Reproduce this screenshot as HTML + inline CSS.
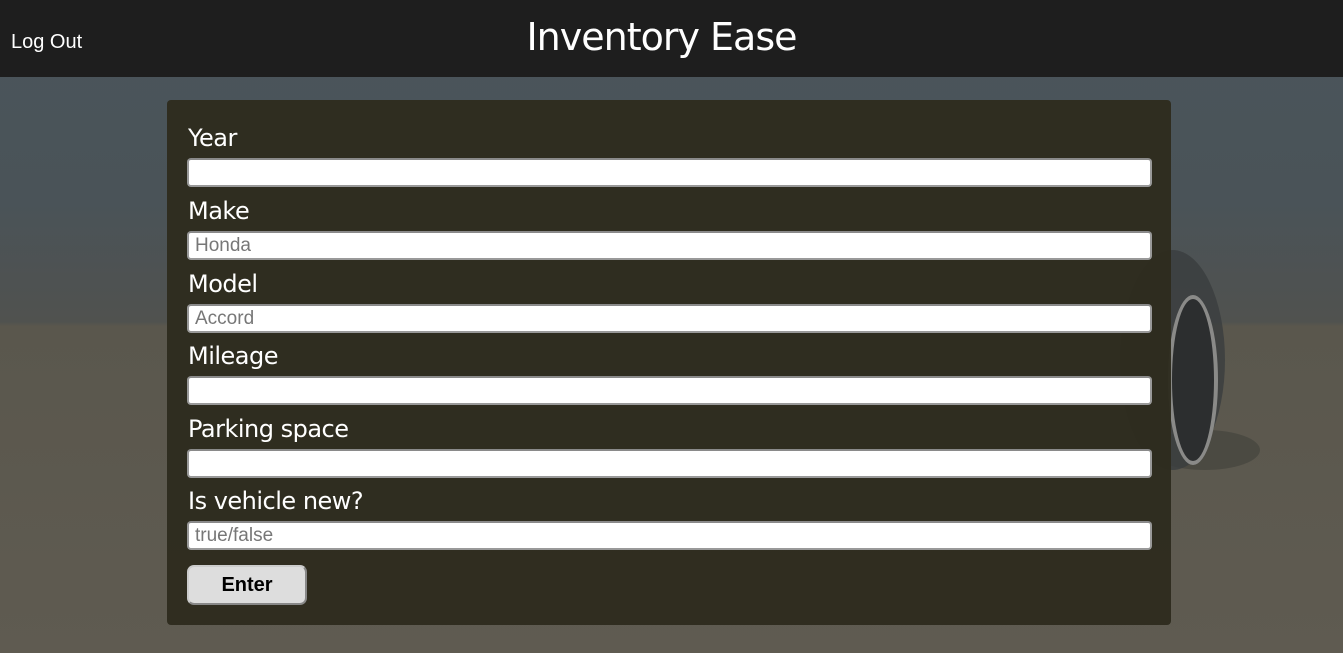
<!DOCTYPE html>
<html><head><style>
body{margin:0;width:1343px;height:653px;overflow:hidden;font-family:"Liberation Sans",sans-serif;background:linear-gradient(#4b555b 0,#4a5358 200px,#50524f 322px,#5a574d 326px,#5f5b51 653px);position:relative}
.hdr{position:absolute;left:0;top:0;width:1343px;height:77px;background:#1e1e1e;color:#fff;z-index:2}
.lo{position:absolute;left:11px;top:31px;font-size:20px}
.t{position:absolute;left:0;width:1323px;text-align:center;top:15px;font-size:38px;font-family:"DejaVu Sans","Liberation Sans",sans-serif;font-weight:normal;letter-spacing:-1px}
.car{position:absolute;left:1120px;top:250px;width:105px;height:220px;border-radius:50%;background:#3a3d3e;opacity:.8}
.wh{position:absolute;left:1168px;top:295px;width:50px;height:170px;border-radius:50%;border:4px solid #8a8a88;background:#2c2e2f;box-sizing:border-box}
.sh{position:absolute;left:1150px;top:430px;width:110px;height:40px;border-radius:50%;background:#45443d;opacity:.7}
.card{position:absolute;left:167px;top:100px;width:1004px;height:525px;background:rgba(46,44,30,0.96);border-radius:4px}
.l{position:absolute;left:21px;color:#fff;font-size:24px;font-family:"DejaVu Sans",sans-serif;letter-spacing:-0.5px}
.i{position:absolute;left:20px;height:25px;background:#fff;border:2px solid #999;border-top-color:#8a8a8a;border-radius:4px;font-size:19px;color:#777;box-sizing:content-box;line-height:25px;padding-left:6px;width:955px}
.b{position:absolute;left:20px;top:465px;width:116px;height:36px;background:#ddd;border:2px solid #888;border-top-color:#ccc;border-left-color:#ccc;border-radius:7px;font-weight:bold;font-size:20px;text-align:center;line-height:36px;color:#000}
</style></head><body>
<div class="hdr"><div class="lo">Log Out</div><div class="t">Inventory Ease</div></div>
<div class="sh"></div><div class="car"></div><div class="wh"></div>
<div class="card">
<div class="l" style="top:24px">Year</div><div class="i" style="top:58px"></div>
<div class="l" style="top:97px">Make</div><div class="i" style="top:131px">Honda</div>
<div class="l" style="top:170px">Model</div><div class="i" style="top:204px">Accord</div>
<div class="l" style="top:242px">Mileage</div><div class="i" style="top:276px"></div>
<div class="l" style="top:315px">Parking space</div><div class="i" style="top:349px"></div>
<div class="l" style="top:387px">Is vehicle new?</div><div class="i" style="top:421px">true/false</div>
<div class="b">Enter</div>
</div>
</body></html>
